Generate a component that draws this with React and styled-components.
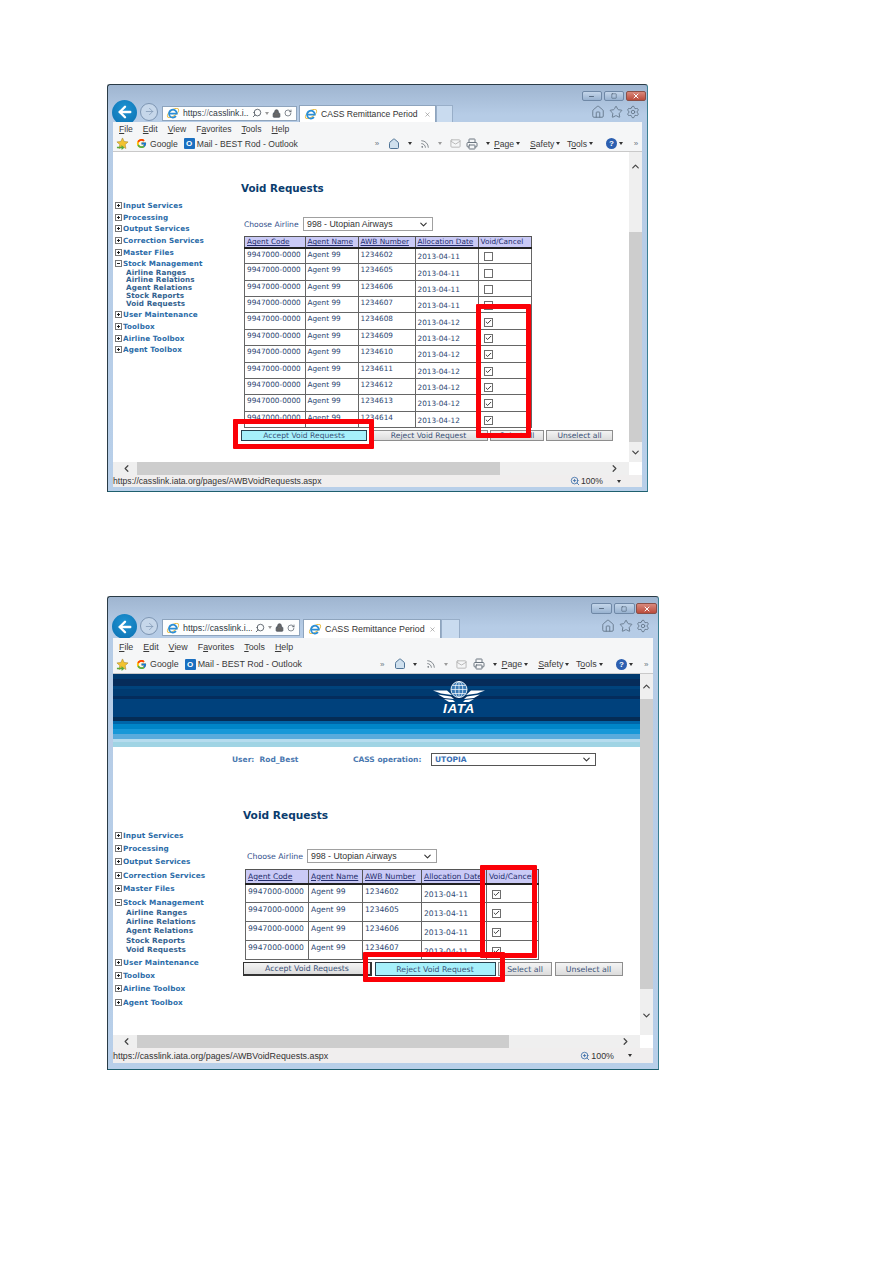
import React from 'react';
import styled, { createGlobalStyle, ThemeProvider } from 'styled-components';
import { ArrowLeft, ArrowRight, Search, Lock, RotateCw, X, Home, Star, Settings, Printer, Rss, Mail, ChevronUp, ChevronDown, ChevronLeft, ChevronRight, Check, Minus, Square, ZoomIn } from 'lucide-react';
import { FcGoogle } from 'react-icons/fc';

const GlobalStyle = createGlobalStyle`
  body {
    margin: 0;
    background: #fff;
    font-family: 'Liberation Sans', Arial, sans-serif;
  }
`;

const firstShot = {
  width: 541, height: 408, titleH: 16, capH: 10, capW: 20.5, navH: 21, addrW: 135, addrH: 15, addrPad: 1.5,
  tabGap: 2, tabW: 137, tabH: 17, blankW: 17, menuH: 14, favH: 16, uiFont: 8.6, statusH: 12, frameB: 4, hscrollH: 13,
  toolStart: 255, toolScale: 1, rightPad: 2,
  sideTop: 48, itemH: 11.6, subH: 7.9, sideFont: 7.2,
  mainX: 128, mainTop: 30, headFont: 10.3, selectGap: 23, tableGap: 5, labelFont: 7.6,
  selectX: 3, selectW: 130, selectH: 14, labelW: 59, tableX: 3, cols: [60.5, 53, 57, 63, 53], headH: 11, rowH: 16.36, cellFont: 7.3, cellTop: 2,
  btnGap: 2, btnH: 11, btnFont: 7.6,
  vTop: 28, vGap: 52, vThumb: 210, vEndPad: 0, hLeft: 24, hThumb: 363,
};

const secondShot = {
  width: 552, height: 474, titleH: 17, capH: 11, capW: 21, navH: 24, addrW: 138, addrH: 17, addrPad: 2,
  tabGap: 3, tabW: 138, tabH: 19, blankW: 19, menuH: 17, favH: 19, uiFont: 8.9, statusH: 15, frameB: 6, hscrollH: 13,
  toolStart: 260, toolScale: 1.02, rightPad: 3,
  sideTop: 57.5, itemH: 13.4, subH: 9.3, sideFont: 7.3,
  mainX: 130, mainTop: 38, headFont: 10.6, selectGap: 28, tableGap: 6, labelFont: 7.8,
  selectX: 4, selectW: 132, selectH: 14, labelW: 60, tableX: 2, cols: [63, 54, 59, 65, 52], headH: 14, rowH: 19, cellFont: 7.6, cellTop: 3,
  btnGap: 2.5, btnH: 14, btnFont: 7.8,
  vTop: 25, vGap: 0, vThumb: 290, vEndPad: 7, hLeft: 24, hThumb: 372,
};

const Page = styled.div`
  width: 893px;
  height: 1263px;
  padding: 84px 0 0 107px;
  box-sizing: border-box;
  display: flex;
  flex-direction: column;
  gap: 104px;
  overflow: hidden;
`;

const Window = styled.div`
  position: relative;
  width: ${p => p.theme.width}px;
  height: ${p => p.theme.height}px;
  box-sizing: border-box;
  display: flex;
  flex-direction: column;
  padding: 0 5px ${p => p.theme.frameB}px;
  border: 1px solid #2a3b46;
  border-bottom-color: #1e5f6e;
  border-right-color: #3a7f92;
  border-radius: 3px 3px 0 0;
  background: linear-gradient(#9fb5d0 0, #b6cce6 30px, #b8cfe9 100%);
`;

const TitleRow = styled.div`
  height: ${p => p.theme.titleH}px;
  margin-right: -4px;
  padding: 6px 0 0;
  box-sizing: border-box;
  display: flex;
  justify-content: flex-end;
  gap: 1.5px;
`;

const CaptionBtn = styled.div`
  width: ${p => p.theme.capW}px;
  height: ${p => p.theme.capH}px;
  display: flex;
  align-items: center;
  justify-content: center;
  box-sizing: border-box;
  border: 1px solid ${p => (p.$close ? '#8a5048' : '#6f88a6')};
  border-radius: 2px;
  color: ${p => (p.$close ? '#fff' : '#3d4f63')};
  background: ${p => (p.$close ? 'linear-gradient(#d9897c, #bb4c3c)' : 'linear-gradient(#c4d6ea, #98b2d0)')};
`;

const NavRow = styled.div`
  height: ${p => p.theme.navH}px;
  margin-left: -1px;
  display: flex;
  align-items: flex-end;
  padding-right: ${p => p.theme.rightPad}px;
`;

const BackBtn = styled.div`
  width: 25px;
  height: 25px;
  flex: none;
  align-self: center;
  margin-bottom: -1px;
  border-radius: 50%;
  display: flex;
  align-items: center;
  justify-content: center;
  color: #fff;
  background: radial-gradient(circle at 50% 35%, #1f93d2, #0a6fb0);
`;

const ForwardBtn = styled.div`
  width: 18px;
  height: 18px;
  flex: none;
  align-self: center;
  margin-left: 3px;
  box-sizing: border-box;
  border-radius: 50%;
  border: 1px solid #7d95b2;
  display: flex;
  align-items: center;
  justify-content: center;
  color: #7d95b2;
  background: #c6d7ea;
`;

const AddressBar = styled.div`
  width: ${p => p.theme.addrW}px;
  height: ${p => p.theme.addrH}px;
  flex: none;
  margin: 0 0 ${p => p.theme.addrPad}px 4px;
  padding: 0 4px 0 3px;
  box-sizing: border-box;
  display: flex;
  align-items: center;
  gap: 3px;
  background: #fdfefe;
  border: 1px solid #8ea4bd;
  color: #49525c;
`;

const AddressText = styled.span`
  flex: 1;
  font-size: ${p => p.theme.uiFont}px;
  color: #2f3a44;
  white-space: nowrap;
  overflow: hidden;
`;

const Faint = styled.span`
  color: #77808a;
`;

const Tab = styled.div`
  width: ${p => p.theme.tabW}px;
  height: ${p => p.theme.tabH}px;
  flex: none;
  margin-left: ${p => p.theme.tabGap}px;
  padding: 0 4px;
  box-sizing: border-box;
  display: flex;
  align-items: center;
  gap: 3px;
  background: #fff;
  border: 1px solid #8ea4bd;
  border-bottom: none;
  font-size: ${p => p.theme.uiFont}px;
  color: #333;
`;

const TabTitle = styled.span`
  flex: 1;
  white-space: nowrap;
`;

const BlankTab = styled.div`
  width: ${p => p.theme.blankW}px;
  height: ${p => p.theme.tabH}px;
  flex: none;
  box-sizing: border-box;
  background: #c9dbef;
  border: 1px solid #98aec8;
  border-bottom: none;
`;

const RightIcons = styled.div`
  margin-left: auto;
  align-self: center;
  display: flex;
  gap: 3.5px;
  color: #f6f8fb;
`;

const Toolbar = styled.div`
  position: relative;
  z-index: 1;
  height: ${p => p.$h}px;
  display: flex;
  align-items: center;
  background: #f5f6f7;
  font-size: ${p => p.theme.uiFont}px;
  color: #3a3a3a;
`;

const MenuList = styled(Toolbar)`
  gap: 10px;
  padding-left: 6px;
`;

const FavLinks = styled.div`
  display: flex;
  align-items: center;
  padding-left: 3px;
  gap: 2px;
  height: 100%;
`;

const FavLabel = styled.span`
  margin-right: ${p => p.$mr || 0}px;
  white-space: nowrap;
`;

const OutlookBadge = styled.span`
  width: 11px;
  height: 11px;
  flex: none;
  display: flex;
  align-items: center;
  justify-content: center;
  background: #1a6fc0;
  color: #fff;
  font-size: 8px;
  font-weight: bold;
  border-radius: 1px;
`;

const ToolSlots = styled.div`
  position: absolute;
  top: 0;
  bottom: 0;
  left: ${p => p.theme.toolStart}px;
  display: flex;
  align-items: center;
`;

const Slot = styled.span`
  width: ${p => p.$w * p.theme.toolScale}px;
  display: flex;
  align-items: center;
  justify-content: ${p => (p.$text ? 'flex-start' : 'center')};
  gap: 2px;
  white-space: nowrap;
  color: ${p => p.$color || '#3a3a3a'};
`;

const Caret = styled.span`
  width: 0;
  height: 0;
  border: 2.5px solid transparent;
  border-top: 3px solid ${p => p.$light ? '#9a9a9a' : '#333'};
  border-bottom: none;
`;

const Glyph = styled.span`
  font-size: 8px;
  color: #6a7785;
`;

const HelpDot = styled.span`
  width: 11px;
  height: 11px;
  border-radius: 50%;
  background: #2c5fb0;
  color: #fff;
  font-size: 8px;
  font-weight: bold;
  display: flex;
  align-items: center;
  justify-content: center;
`;

const ContentRow = styled.div`
  flex: 1;
  min-height: 0;
  display: flex;
  background: #fff;
`;

const Viewport = styled.div`
  flex: 1;
  min-width: 0;
  overflow: hidden;
  font-family: 'DejaVu Sans', Verdana, sans-serif;
`;

const VScroll = styled.div`
  width: 13px;
  flex: none;
  display: flex;
  flex-direction: column;
  background: #efefef;
  color: #444;
`;

const ArrowSlot = styled.div`
  height: ${p => p.$h}px;
  flex: ${p => (p.$grow ? 1 : 'none')};
  display: flex;
  align-items: center;
  justify-content: center;
  padding-top: ${p => p.$pad || 0}px;
`;

const VThumb = styled.div`
  height: ${p => p.theme.vThumb}px;
  margin-top: ${p => p.theme.vGap}px;
  flex: none;
  background: #cdcdcd;
`;

const HScrollRow = styled.div`
  height: ${p => p.theme.hscrollH}px;
  flex: none;
  display: flex;
  background: #fff;
`;

const HScroll = styled.div`
  flex: 1;
  display: flex;
  align-items: center;
  background: #efefef;
  color: #444;
`;

const HSlot = styled.div`
  width: ${p => p.theme.hLeft}px;
  padding-left: 8px;
  box-sizing: border-box;
  flex: none;
  display: flex;
  align-items: center;
`;

const HThumb = styled.div`
  width: ${p => p.theme.hThumb}px;
  height: 100%;
  flex: none;
  background: #cdcdcd;
`;

const HEnd = styled.div`
  margin-left: auto;
  padding-right: 9px;
  display: flex;
  align-items: center;
`;

const Corner = styled.div`
  width: 13px;
  flex: none;
`;

const StatusBar = styled.div`
  height: ${p => p.theme.statusH}px;
  flex: none;
  display: flex;
  align-items: center;
  background: #f0eeee;
  font-size: ${p => p.theme.uiFont}px;
  color: #333;
`;

const StatusZoom = styled.div`
  margin-left: auto;
  margin-right: 21px;
  display: flex;
  align-items: center;
  gap: 1px;
`;

const StatusCaret = styled.span`
  margin-left: 13px;
  display: flex;
`;

const Banner = styled.div`
  height: 73px;
  padding-left: 320px;
  padding-top: 7px;
  box-sizing: border-box;
  background: linear-gradient(
    #00396e 0 5px, #062c5a 5px 12px, #00437c 12px 15px, #003a70 15px 22px, #042c5c 22px 25px,
    #00417c 25px 43px, #052c55 43px 47px, #0065a8 47px 50px, #0085c8 50px 55px, #1898d8 55px 60px,
    #5aabdc 60px 65px, #b6dcee 65px 68px, #a0d4e4 68px 73px
  );
`;

const UserRow = styled.div`
  height: 24px;
  display: flex;
  align-items: center;
  padding-left: 119px;
  font-weight: bold;
  font-size: 7.5px;
  color: #4a78b0;
`;

const UserName = styled.span`
  width: 121px;
  white-space: pre;
`;

const OperationLabel = styled.span`
  width: 78px;
`;

const SelectBox = styled.div`
  width: ${p => p.$w}px;
  height: ${p => p.$h}px;
  box-sizing: border-box;
  flex: none;
  display: flex;
  align-items: center;
  justify-content: space-between;
  padding: 0 3px;
  background: #fff;
  border: 1px solid ${p => (p.$dark ? '#555' : '#a0a0a0')};
  color: ${p => (p.$bold ? '#3b70b4' : '#333')};
  font-weight: ${p => (p.$bold ? 'bold' : 'normal')};
  font-size: ${p => (p.$bold ? '7.5px' : '8.8px')};
  font-family: ${p => (p.$bold ? 'inherit' : "'Liberation Sans', Arial, sans-serif")};
`;

const Columns = styled.div`
  display: flex;
  align-items: flex-start;
`;

const Sidebar = styled.ul`
  width: ${p => p.theme.mainX}px;
  flex: none;
  box-sizing: border-box;
  margin: 0;
  padding: ${p => p.theme.sideTop}px 0 0 2px;
  list-style: none;
  font-weight: bold;
  font-size: ${p => p.theme.sideFont}px;
  color: #2b6ca8;
  letter-spacing: 0.1px;
`;

const SideItem = styled.li`
  height: ${p => p.theme.itemH}px;
  display: flex;
  align-items: center;
  gap: 1px;
  white-space: nowrap;
`;

const TreeBox = styled.span`
  width: 7px;
  height: 7px;
  flex: none;
  box-sizing: border-box;
  position: relative;
  border: 1px solid #777;
  background: #fff;
  &::before {
    content: '';
    position: absolute;
    left: 1px;
    right: 1px;
    top: 2px;
    height: 1px;
    background: #222;
  }
  &::after {
    content: '';
    display: ${p => (p.$open ? 'none' : 'block')};
    position: absolute;
    top: 1px;
    bottom: 1px;
    left: 2px;
    width: 1px;
    background: #222;
  }
`;

const SubList = styled.ul`
  margin: -1px 0 1px;
  padding: 0 0 0 11px;
  list-style: none;
  color: #33628f;
`;

const SubItem = styled.li`
  height: ${p => p.theme.subH}px;
  line-height: ${p => p.theme.subH}px;
  white-space: nowrap;
`;

const Main = styled.div`
  flex: 1;
  min-width: 0;
  padding-top: ${p => p.theme.mainTop}px;
`;

const Heading = styled.h1`
  margin: 0;
  height: 12px;
  line-height: 12px;
  font-size: ${p => p.theme.headFont}px;
  color: #0a3c6e;
  white-space: nowrap;
`;

const AirlineRow = styled.div`
  margin-top: ${p => p.theme.selectGap}px;
  padding-left: ${p => p.theme.selectX}px;
  display: flex;
  align-items: center;
`;

const AirlineLabel = styled.label`
  width: ${p => p.theme.labelW}px;
  font-size: ${p => p.theme.labelFont}px;
  color: #33508c;
  white-space: nowrap;
`;

const Grid = styled.table`
  margin: ${p => p.theme.tableGap}px 0 0 ${p => p.theme.tableX}px;
  table-layout: fixed;
  width: ${p => p.theme.cols.reduce((a, b) => a + b, 0)}px;
  border-collapse: collapse;
  border: 1px solid #333;
  font-size: ${p => p.theme.cellFont}px;
  color: #2b4570;
`;

const HeadCell = styled.th`
  height: ${p => p.theme.headH}px;
  padding: 0 2px;
  background: #cacaf6;
  border: 1px solid #555;
  border-bottom: 2px solid #222;
  text-align: left;
  font-weight: normal;
  text-decoration: ${p => (p.$plain ? 'none' : 'underline')};
  color: #232c6c;
  white-space: nowrap;
  overflow: hidden;
  box-sizing: border-box;
`;

const Cell = styled.td`
  height: ${p => p.theme.rowH}px;
  box-sizing: border-box;
  padding: ${p => (p.$mid ? 2 : p.theme.cellTop - 1)}px 2px 0;
  border: 1px solid #666;
  vertical-align: ${p => (p.$mid ? 'middle' : 'top')};
  white-space: nowrap;
  overflow: hidden;
`;

const TickBox = styled.span`
  width: 9px;
  height: 9px;
  margin-left: 3px;
  box-sizing: border-box;
  display: flex;
  align-items: center;
  justify-content: center;
  border: 1px solid #6d6d6d;
  background: #fff;
  color: #222;
`;

const ActionRow = styled.div`
  margin-top: 2px;
  display: flex;
  gap: ${p => p.theme.btnGap}px;
`;

const ActionBtn = styled.button`
  width: ${p => p.$w}px;
  height: ${p => p.theme.btnH}px;
  flex: none;
  padding: 0;
  box-sizing: border-box;
  font-family: inherit;
  font-size: ${p => p.theme.btnFont}px;
  color: #3a5278;
  border: 1px solid ${p => (p.$hot ? '#27414f' : '#8e8e8e')};
  border-right-width: ${p => (p.$heavy ? 2 : 1)}px;
  border-bottom-width: ${p => (p.$heavy ? 2 : 1)}px;
  border-color: ${p => (p.$heavy ? '#333' : undefined)};
  background: ${p => (p.$hot ? '#a6f0fb' : 'linear-gradient(#f4f4f4, #dcdcdc)')};
`;

const Callout = styled.div`
  position: absolute;
  z-index: 3;
  left: ${p => p.$x}px;
  top: ${p => p.$y}px;
  width: ${p => p.$w}px;
  height: ${p => p.$h}px;
  box-sizing: border-box;
  border: 5px solid #fb0007;
  border-radius: 1px;
`;

const LogoMark = styled.svg`
  display: block;
  width: 52px;
  height: 33px;
`;

function IeIcon() {
  return (
    <svg width="14" height="14" viewBox="0 0 16 16" style={{ flex: 'none' }}>
      <ellipse cx="8" cy="8" rx="7.6" ry="3.4" transform="rotate(-35 8 8)" fill="none" stroke="#e6b93a" strokeWidth="1.1" />
      <path d="M3.6 8.8h8.8a4.5 4.5 0 1 0-1 2.8" fill="none" stroke="#2a8ed8" strokeWidth="2" />
    </svg>
  );
}

function FavStar() {
  return (
    <svg width="13" height="13" viewBox="0 0 14 14" style={{ flex: 'none' }}>
      <path d="M7 1l1.8 3.8 4.2.5-3.1 2.9.8 4.2L7 10.3l-3.7 2.1.8-4.2L1 5.3l4.2-.5z" fill="#f2c230" stroke="#a8842a" strokeWidth=".6" />
      <path d="M1 10.5h5v-2l3 3-3 2.5v-2H1z" fill="#5aa83a" />
    </svg>
  );
}

function Underlined({ text, at = 0 }) {
  return (
    <span>
      {text.slice(0, at)}
      <u>{text[at]}</u>
      {text.slice(at + 1)}
    </span>
  );
}

function IataLogo() {
  const wing = (
    <g fill="#fff">
      <path d="M0 9.5H14L19 14 8 12.5Z" />
      <path d="M5 13.5L18 15.5 21 18 11 17Z" />
      <path d="M11 18L20 19 22 21 16 21Z" />
    </g>
  );
  return (
    <LogoMark viewBox="0 0 52 33">
      <circle cx="26" cy="8.5" r="8" fill="#3a7ab5" stroke="#fff" strokeWidth=".9" />
      <ellipse cx="26" cy="8.5" rx="3.8" ry="8" fill="none" stroke="#fff" strokeWidth=".7" />
      <path d="M18 8.5h16M19.5 4.5h13M19.5 12.5h13M26 .5v16" stroke="#fff" strokeWidth=".7" />
      {wing}
      <g transform="translate(52 0) scale(-1 1)">{wing}</g>
      <text x="26" y="32" textAnchor="middle" fontFamily="Liberation Sans" fontWeight="bold" fontStyle="italic" fontSize="13.5" letterSpacing=".6" fill="#fff">IATA</text>
    </LogoMark>
  );
}

function BrowserChrome() {
  return (
    <>
      <TitleRow>
        <CaptionBtn><Minus size={7} strokeWidth={2.5} /></CaptionBtn>
        <CaptionBtn><Square size={6} strokeWidth={2} /></CaptionBtn>
        <CaptionBtn $close><X size={8} strokeWidth={3} /></CaptionBtn>
      </TitleRow>
      <NavRow>
        <BackBtn><ArrowLeft size={18} strokeWidth={3.2} /></BackBtn>
        <ForwardBtn><ArrowRight size={11} strokeWidth={1.6} /></ForwardBtn>
        <AddressBar>
          <IeIcon />
          <AddressText>https:<Faint>//</Faint>casslink.i...</AddressText>
          <Search size={10} style={{ transform: 'scaleX(-1)' }} />
          <Caret $light />
          <Lock size={9} fill="#666" />
          <RotateCw size={8} />
        </AddressBar>
        <Tab>
          <IeIcon />
          <TabTitle>CASS Remittance Period</TabTitle>
          <X size={7} color="#888" />
        </Tab>
        <BlankTab />
        <RightIcons>
          <Home size={14} strokeWidth={1.6} color="#66788c" />
          <Star size={14} strokeWidth={1.6} color="#66788c" />
          <Settings size={14} strokeWidth={1.6} color="#66788c" />
        </RightIcons>
      </NavRow>
      <MenuList $h={0} as={MenuBar}>
        <Underlined text="File" />
        <Underlined text="Edit" />
        <Underlined text="View" />
        <Underlined text="Favorites" at={1} />
        <Underlined text="Tools" />
        <Underlined text="Help" />
      </MenuList>
      <FavBar>
        <FavLinks>
          <FavStar />
          <FcGoogle size={11} style={{ marginLeft: 5, marginRight: 1 }} />
          <FavLabel $mr={4}>Google</FavLabel>
          <OutlookBadge>O</OutlookBadge>
          <FavLabel>Mail - BEST Rod - Outlook</FavLabel>
        </FavLinks>
        <ToolSlots>
          <Slot $w={18}><Glyph>»</Glyph></Slot>
          <Slot $w={16}><Home size={12} color="#4f7396" fill="#cfe0ee" /></Slot>
          <Slot $w={15}><Caret /></Slot>
          <Slot $w={16}><Rss size={10} color="#70777d" /></Slot>
          <Slot $w={14}><Caret $light /></Slot>
          <Slot $w={16}><Mail size={11} color="#b5b5b5" /></Slot>
          <Slot $w={18}><Printer size={12} color="#6c7680" /></Slot>
          <Slot $w={13}><Caret /></Slot>
          <Slot $w={36} $text><Underlined text="Page" /><Caret /></Slot>
          <Slot $w={37} $text><Underlined text="Safety" /><Caret /></Slot>
          <Slot $w={33} $text><Underlined text="Tools" at={1} /><Caret /></Slot>
          <Slot $w={29}><HelpDot>?</HelpDot><Caret /></Slot>
          <Slot $w={14}><Glyph>»</Glyph></Slot>
        </ToolSlots>
      </FavBar>
    </>
  );
}

const MenuBar = styled(Toolbar)`
  height: ${p => p.theme.menuH}px;
  gap: 10px;
  padding-left: 6px;
`;

const FavBar = styled(Toolbar)`
  height: ${p => p.theme.favH}px;
  border-bottom: 1px solid #c9c9c9;
  box-sizing: border-box;
`;

const groupsBefore = ['Input Services', 'Processing', 'Output Services', 'Correction Services', 'Master Files'];
const groupsAfter = ['User Maintenance', 'Toolbox', 'Airline Toolbox', 'Agent Toolbox'];
const stockLinks = ['Airline Ranges', 'Airline Relations', 'Agent Relations', 'Stock Reports', 'Void Requests'];

function SideMenu() {
  return (
    <Sidebar>
      {groupsBefore.map(name => (
        <SideItem key={name}><TreeBox />{name}</SideItem>
      ))}
      <SideItem><TreeBox $open />Stock Management</SideItem>
      <SubList>
        {stockLinks.map(name => <SubItem key={name}>{name}</SubItem>)}
      </SubList>
      {groupsAfter.map(name => (
        <SideItem key={name}><TreeBox />{name}</SideItem>
      ))}
    </Sidebar>
  );
}

function VoidPanel({ rows, buttons }) {
  return (
    <Main>
      <Heading>Void Requests</Heading>
      <AirlineRow>
        <AirlineLabel>Choose Airline</AirlineLabel>
        <SelectBox $w={130} $h={14}>998 - Utopian Airways<ChevronDown size={11} strokeWidth={2.4} color="#333" /></SelectBox>
      </AirlineRow>
      <VoidTable rows={rows} />
      <ActionRow>
        {buttons.map(b => (
          <ActionBtn key={b.label} $w={b.w} $hot={b.hot} $heavy={b.heavy}>{b.label}</ActionBtn>
        ))}
      </ActionRow>
    </Main>
  );
}

function VoidTable({ rows }) {
  return (
    <ThemeAwareGrid>
      <thead>
        <tr>
          <HeadCell>Agent Code</HeadCell>
          <HeadCell>Agent Name</HeadCell>
          <HeadCell>AWB Number</HeadCell>
          <HeadCell>Allocation Date</HeadCell>
          <HeadCell $plain>Void/Cancel</HeadCell>
        </tr>
      </thead>
      <tbody>
        {rows.map(r => (
          <tr key={r.awb}>
            <Cell>9947000-0000</Cell>
            <Cell>Agent 99</Cell>
            <Cell>{r.awb}</Cell>
            <Cell $mid>{r.date}</Cell>
            <Cell $mid>
              <TickBox>{r.checked && <Check size={8} strokeWidth={3} />}</TickBox>
            </Cell>
          </tr>
        ))}
      </tbody>
    </ThemeAwareGrid>
  );
}

const ThemeAwareGrid = styled(Grid)`
  th:nth-child(1), td:nth-child(1) { width: ${p => p.theme.cols[0]}px; }
  th:nth-child(2), td:nth-child(2) { width: ${p => p.theme.cols[1]}px; }
  th:nth-child(3), td:nth-child(3) { width: ${p => p.theme.cols[2]}px; }
  th:nth-child(4), td:nth-child(4) { width: ${p => p.theme.cols[3]}px; }
  th:nth-child(5), td:nth-child(5) { width: ${p => p.theme.cols[4]}px; }
`;

function ScrollFrame() {
  return (
    <VScroll>
      <ArrowSlotTop />
      <VThumb />
      <ArrowSlotBottom />
    </VScroll>
  );
}

function ArrowSlotTop() {
  return (
    <ThemedTop><ChevronUp size={11} strokeWidth={2.6} /></ThemedTop>
  );
}

function ArrowSlotBottom() {
  return (
    <ThemedBottom $grow><ChevronDown size={11} strokeWidth={2.6} /></ThemedBottom>
  );
}

const ThemedTop = styled(ArrowSlot)`
  height: ${p => p.theme.vTop}px;
`;

const ThemedBottom = styled(ArrowSlot)`
  padding-top: ${p => p.theme.vEndPad}px;
`;

function BottomBars({ children }) {
  return (
    <>
      <HScrollRow>
        <HScroll>
          <HSlot><ChevronLeft size={11} strokeWidth={2.6} /></HSlot>
          <HThumb />
          <HEnd><ChevronRight size={11} strokeWidth={2.6} /></HEnd>
        </HScroll>
        <Corner />
      </HScrollRow>
      <StatusBar>
        https://casslink.iata.org/pages/AWBVoidRequests.aspx
        <StatusZoom>
          <ZoomIn size={10} color="#3a6ea8" />
          100%
          <StatusCaret><Caret /></StatusCaret>
        </StatusZoom>
      </StatusBar>
      {children}
    </>
  );
}

const rowsFirst = [
  ['1234602', '2013-04-11', false],
  ['1234605', '2013-04-11', false],
  ['1234606', '2013-04-11', false],
  ['1234607', '2013-04-11', false],
  ['1234608', '2013-04-12', true],
  ['1234609', '2013-04-12', true],
  ['1234610', '2013-04-12', true],
  ['1234611', '2013-04-12', true],
  ['1234612', '2013-04-12', true],
  ['1234613', '2013-04-12', true],
  ['1234614', '2013-04-12', true],
].map(([awb, date, checked]) => ({ awb, date, checked }));

const rowsSecond = [
  ['1234602', '2013-04-11', true],
  ['1234605', '2013-04-11', true],
  ['1234606', '2013-04-11', true],
  ['1234607', '2013-04-11', true],
].map(([awb, date, checked]) => ({ awb, date, checked }));

const buttonsFirst = [
  { label: 'Accept Void Requests', w: 126, hot: true },
  { label: 'Reject Void Request', w: 119 },
  { label: 'Select all', w: 54 },
  { label: 'Unselect all', w: 67 },
];

const buttonsSecond = [
  { label: 'Accept Void Requests', w: 129, heavy: true },
  { label: 'Reject Void Request', w: 121, hot: true },
  { label: 'Select all', w: 54 },
  { label: 'Unselect all', w: 68 },
];

export default function App() {
  return (
    <Page>
      <GlobalStyle />
      <ThemeProvider theme={firstShot}>
        <Window>
          <BrowserChrome />
          <ContentRow>
            <Viewport>
              <Columns>
                <SideMenu />
                <VoidPanel rows={rowsFirst} buttons={buttonsFirst} />
              </Columns>
            </Viewport>
            <ScrollFrame />
          </ContentRow>
          <BottomBars />
          <Callout $x={368} $y={219} $w={55} $h={134} />
          <Callout $x={125} $y={334} $w={141} $h={30} />
        </Window>
      </ThemeProvider>
      <ThemeProvider theme={secondShot}>
        <Window>
          <BrowserChrome />
          <ContentRow>
            <Viewport>
              <Banner><IataLogo /></Banner>
              <UserRow>
                <UserName>User:  Rod_Best</UserName>
                <OperationLabel>CASS operation:</OperationLabel>
                <SelectBox $w={165} $h={13} $bold $dark>UTOPIA<ChevronDown size={11} strokeWidth={2.4} color="#333" /></SelectBox>
              </UserRow>
              <Columns>
                <SideMenu />
                <VoidPanel rows={rowsSecond} buttons={buttonsSecond} />
              </Columns>
            </Viewport>
            <ScrollFrame />
          </ContentRow>
          <BottomBars />
          <Callout $x={372} $y={268} $w={57} $h={93} />
          <Callout $x={255} $y={355} $w={142} $h={30} />
        </Window>
      </ThemeProvider>
    </Page>
  );
}
